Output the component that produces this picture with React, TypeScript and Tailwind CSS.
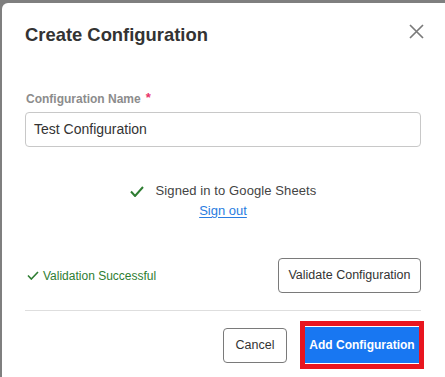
import React from 'react';

const CloseIcon: React.FC = () => (
  <svg width="15" height="15" viewBox="0 0 15 15" className="shrink-0">
    <path d="M1 1 L14 14 M14 1 L1 14" stroke="#7a7a7a" strokeWidth="1.7" fill="none" />
  </svg>
);

const Check: React.FC<{ w: number; h: number; stroke?: number }> = ({ w, h, stroke = 2 }) => (
  <svg width={w} height={h} viewBox={`0 0 ${w} ${h}`} className="shrink-0">
    <path
      d={`M1 ${h * 0.5} L${w * 0.36} ${h - 1} L${w - 1} 1`}
      stroke="#2e7d32"
      strokeWidth={stroke}
      fill="none"
    />
  </svg>
);

export default function App() {
  return (
    <div className="w-[445px] h-[377px] overflow-hidden bg-[#7f7f7f] pl-[2px] pt-[3px] font-['Liberation_Sans',Arial,sans-serif]">
      <div className="w-[500px] h-[420px] bg-white rounded-tl-[6px] pl-[23px]">
        {/* Header */}
        <div className="w-[399px] pt-[20px] flex items-start justify-between">
          <h2 className="text-[18.4px] leading-[24px] font-bold text-[#333]">Create Configuration</h2>
          <div className="mt-[1px]">
            <CloseIcon />
          </div>
        </div>

        {/* Form */}
        <div className="w-[396px]">
          <label className="flex items-start mt-[44px] pl-[1px] text-[12px] leading-[16px] font-bold text-[#8c8c8c]">
            Configuration Name
            <span className="ml-[5px] text-[13px] leading-[13px] text-[#e8336a]">*</span>
          </label>
          <div className="mt-[5px] h-[35px] border border-[#c8c8c8] rounded-[4px] pl-[8px] flex items-center text-[14px] text-[#333]">
            Test Configuration
          </div>

          <div className="mt-[35px] flex flex-col items-center">
            <div className="flex items-center gap-[12px] text-[13px] leading-[18px] text-[#444] tracking-[0.1px]">
              <Check w={14} h={11} />
              <span>Signed in to Google Sheets</span>
            </div>
            <a className="mt-[2px] text-[13px] leading-[18px] text-[#2a7de1] underline underline-offset-[2px]">Sign out</a>
          </div>

          <div className="mt-[38px] flex items-center justify-between">
            <div className="flex items-center gap-[4px] pl-[2px] text-[12px] text-[#2e7d32]">
              <Check w={12} h={9} stroke={1.6} />
              <span>Validation Successful</span>
            </div>
            <button className="h-[35px] w-[143px] border border-[#7a7a7a] rounded-[4px] text-[12.5px] text-[#333] bg-white">
              Validate Configuration
            </button>
          </div>

          <div className="mt-[17px] h-px bg-[#dedede]" />
        </div>

        {/* Footer */}
        <div className="w-[399px] mt-[10px] flex items-center justify-end gap-[13px]">
          <button className="h-[35px] w-[64px] border border-[#7a7a7a] rounded-[4px] text-[12.5px] text-[#333] bg-white">
            Cancel
          </button>
          <div className="border-[5px] border-[#e8151f] py-[1px] bg-white">
            <button className="h-[36px] w-[114px] bg-[#1877f2] text-white text-[12px] font-bold">
              Add Configuration
            </button>
          </div>
        </div>
      </div>
    </div>
  );
}
